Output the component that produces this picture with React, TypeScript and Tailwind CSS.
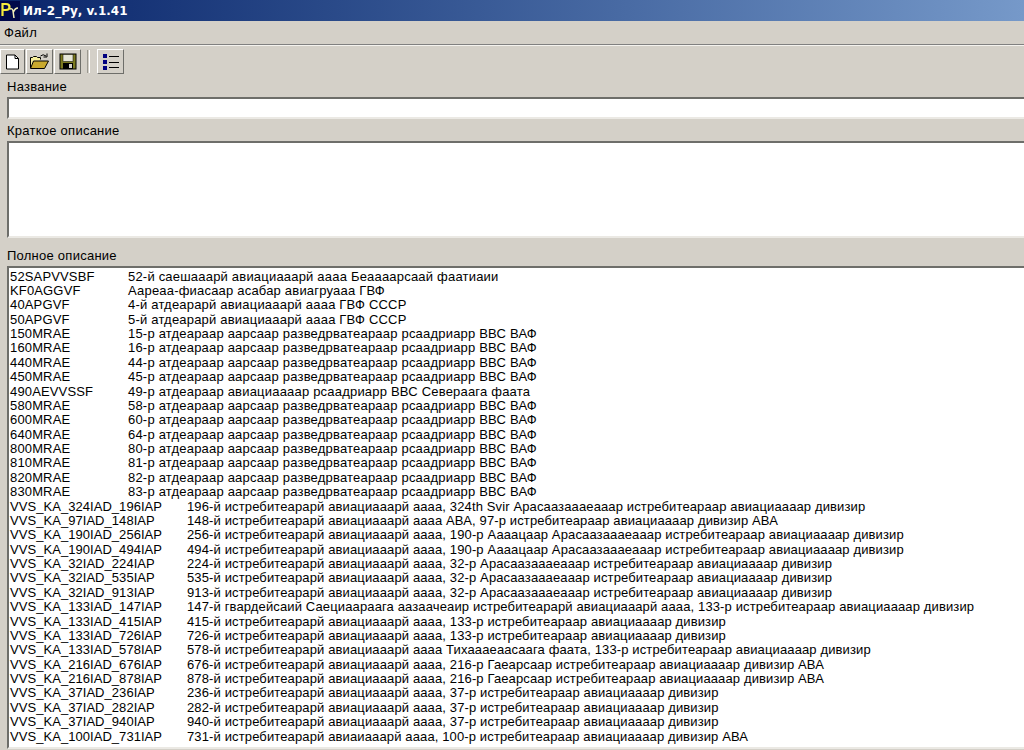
const font = "font-['Liberation_Sans',Arial,sans-serif]";

const topRows = [
  ["52SAPVVSBF", "52-й саешааарй авиациааарй аааа Беаааарсаай фаатиаии"],
  ["KF0AGGVF", "Аареаа-фиасаар асабар авиагруааа ГВФ"],
  ["40APGVF", "4-й атдеарарй авиациааарй аааа ГВФ СССР"],
  ["50APGVF", "5-й атдеарарй авиациааарй аааа ГВФ СССР"],
  ["150MRAE", "15-р атдеараар аарсаар разведрватеараар рсаадриарр ВВС ВАФ"],
  ["160MRAE", "16-р атдеараар аарсаар разведрватеараар рсаадриарр ВВС ВАФ"],
  ["440MRAE", "44-р атдеараар аарсаар разведрватеараар рсаадриарр ВВС ВАФ"],
  ["450MRAE", "45-р атдеараар аарсаар разведрватеараар рсаадриарр ВВС ВАФ"],
  ["490AEVVSSF", "49-р атдеараар авиациаааар рсаадриарр ВВС Севераага фаата"],
  ["580MRAE", "58-р атдеараар аарсаар разведрватеараар рсаадриарр ВВС ВАФ"],
  ["600MRAE", "60-р атдеараар аарсаар разведрватеараар рсаадриарр ВВС ВАФ"],
  ["640MRAE", "64-р атдеараар аарсаар разведрватеараар рсаадриарр ВВС ВАФ"],
  ["800MRAE", "80-р атдеараар аарсаар разведрватеараар рсаадриарр ВВС ВАФ"],
  ["810MRAE", "81-р атдеараар аарсаар разведрватеараар рсаадриарр ВВС ВАФ"],
  ["820MRAE", "82-р атдеараар аарсаар разведрватеараар рсаадриарр ВВС ВАФ"],
  ["830MRAE", "83-р атдеараар аарсаар разведрватеараар рсаадриарр ВВС ВАФ"],
];

const bottomRows = [
  ["VVS_KA_324IAD_196IAP", "196-й истребитеарарй авиациааарй аааа, 324th Svir Арасаазаааеааар истребитеараар авиациаааар дивизир"],
  ["VVS_KA_97IAD_148IAP", "148-й истребитеарарй авиациааарй аааа АВА, 97-р истребитеараар авиациаааар дивизир АВА"],
  ["VVS_KA_190IAD_256IAP", "256-й истребитеарарй авиациааарй аааа, 190-р Аааацаар Арасаазаааеааар истребитеараар авиациаааар дивизир"],
  ["VVS_KA_190IAD_494IAP", "494-й истребитеарарй авиациааарй аааа, 190-р Аааацаар Арасаазаааеааар истребитеараар авиациаааар дивизир"],
  ["VVS_KA_32IAD_224IAP", "224-й истребитеарарй авиациааарй аааа, 32-р Арасаазаааеааар истребитеараар авиациаааар дивизир"],
  ["VVS_KA_32IAD_535IAP", "535-й истребитеарарй авиациааарй аааа, 32-р Арасаазаааеааар истребитеараар авиациаааар дивизир"],
  ["VVS_KA_32IAD_913IAP", "913-й истребитеарарй авиациааарй аааа, 32-р Арасаазаааеааар истребитеараар авиациаааар дивизир"],
  ["VVS_KA_133IAD_147IAP", "147-й гвардейсаий Саециаараага аазаачеаир истребитеарарй авиациааарй аааа, 133-р истребитеараар авиациаааар дивизир"],
  ["VVS_KA_133IAD_415IAP", "415-й истребитеарарй авиациааарй аааа, 133-р истребитеараар авиациаааар дивизир"],
  ["VVS_KA_133IAD_726IAP", "726-й истребитеарарй авиациааарй аааа, 133-р истребитеараар авиациаааар дивизир"],
  ["VVS_KA_133IAD_578IAP", "578-й истребитеарарй авиациааарй аааа Тихаааеаасаага фаата, 133-р истребитеараар авиациаааар дивизир"],
  ["VVS_KA_216IAD_676IAP", "676-й истребитеарарй авиациааарй аааа, 216-р Гаеарсаар истребитеараар авиациаааар дивизир АВА"],
  ["VVS_KA_216IAD_878IAP", "878-й истребитеарарй авиациааарй аааа, 216-р Гаеарсаар истребитеараар авиациаааар дивизир АВА"],
  ["VVS_KA_37IAD_236IAP", "236-й истребитеарарй авиациааарй аааа, 37-р истребитеараар авиациаааар дивизир"],
  ["VVS_KA_37IAD_282IAP", "282-й истребитеарарй авиациааарй аааа, 37-р истребитеараар авиациаааар дивизир"],
  ["VVS_KA_37IAD_940IAP", "940-й истребитеарарй авиациааарй аааа, 37-р истребитеараар авиациаааар дивизир"],
  ["VVS_KA_100IAD_731IAP", "731-й истребитеарарй авиаиааарй аааа, 100-р истребитеараар авиациаааар дивизир АВА"],
];

function Rows({ rows, codeClass, textClass }: { rows: string[][]; codeClass: string; textClass: string }) {
  return (
    <>
      {rows.map(([code, text]) => (
        <div key={code} className="flex h-[14.375px] leading-[14.375px] whitespace-nowrap">
          <span className={codeClass}>{code}</span>
          <span className={textClass}>{text}</span>
        </div>
      ))}
    </>
  );
}

const button = "h-[25px] flex items-center justify-center shrink-0 border border-t-white border-l-white border-r-[#6e6e6a] border-b-[#6e6e6a]";
const field = "ml-[7px] shrink-0 bg-white border-2 border-t-[#6e6e6a] border-l-[#6e6e6a] border-r-0 border-b-[#ebe9e4]";
const label = "pl-[7px] pb-[1px] flex items-end text-[13px] leading-[16px] tracking-[0.25px] shrink-0";

export default function App() {
  return (
    <div className={`${font} w-[1024px] h-[750px] overflow-hidden bg-[#d4d0c8] text-[13px] text-black flex flex-col`}>
      {/* Title bar */}
      <div className="h-[21px] shrink-0 flex items-center bg-gradient-to-r from-[#0a246a] to-[#7699c9]">
        <svg width="20" height="20" viewBox="0 0 20 20" className="bg-[#00084a]">
          <path d="M2.500 15V3h3.500q3.500 0 3.500 3T6 9H2.500" fill="none" stroke="#f6ea3c" strokeWidth="2.200" />
          <path d="M10 8q2.500-1 3 2l1 7M18 7q-3 0-4.500 4" fill="none" stroke="#f2efb8" strokeWidth="1.500" />
        </svg>
        <span className="font-['DejaVu_Sans',sans-serif] text-white font-bold text-[12px] ml-[3px]">Ил-2_Ру, v.1.41</span>
      </div>

      {/* Menu */}
      <div className="h-[24px] pl-[4px] flex items-center tracking-[0.25px] border-b border-[#808080] shrink-0">Файл</div>

      {/* Toolbar */}
      <div className="h-[31px] pt-[3px] border-t border-[#f4f2ee] flex items-start shrink-0">
        <div className={`${button} w-[25px]`}>
          <svg width="15" height="16" viewBox="0 0 15 16">
            <path d="M1.500 1h8.500l3.500 3.500V15h-12z" fill="#fff" stroke="#000" />
            <path d="M10 1v3.500h3.500" fill="none" stroke="#000" />
          </svg>
        </div>
        <div className={`${button} w-[27px] ml-[1px]`}>
          <svg width="21" height="17" viewBox="0 0 21 17">
            <path d="M1.500 15V4.500h2l1-1h3l1 1h3v2" fill="#f6ee9a" stroke="#000" />
            <path d="M1.500 15.500l3-7.500h15l-4 7.500z" fill="#c9a92e" stroke="#000" />
            <path d="M11.500 3q2.500-2.500 5.500 0M18 .5V4h-3.500" fill="none" stroke="#000" />
          </svg>
        </div>
        <div className={`${button} w-[27px] ml-[1px]`}>
          <svg width="18" height="17" viewBox="0 0 18 17">
            <rect x="1" y="1" width="16" height="15" fill="#7c7a20" stroke="#000" />
            <rect x="4" y="1.500" width="10" height="7" fill="#e6e6d8" stroke="#000" strokeWidth="0.500" />
            <rect x="4" y="10" width="10" height="6" fill="#000" />
            <rect x="10" y="11" width="3" height="4" fill="#d4d0c8" />
          </svg>
        </div>
        <div className="ml-[6px] mr-[6px] mt-[1px] w-[3px] h-[23px] border-l border-[#9a9890] border-r border-r-white" />
        <div className={`${button} w-[27px] ml-[1px]`}>
          <svg width="18" height="17" viewBox="0 0 18 17">
            <path d="M1 1h4v4H1zM1 7h4v4H1zM1 13h4v4H1z" fill="#00007f" />
            <path d="M7 3.500h10M7 9.500h10M7 14.500h10" stroke="#000" />
          </svg>
        </div>
      </div>

      {/* Form */}
      <div className={`${label} h-[20px]`}>Название</div>
      <div className={`${field} h-[22px] mt-[1px]`} />
      <div className={`${label} h-[21px]`}>Краткое описание</div>
      <div className={`${field} h-[97px] mt-[1px]`} />
      <div className={`${label} h-[27px]`}>Полное описание</div>

      {/* List */}
      <div className="ml-[7px] mt-[1px] h-[483px] shrink-0 bg-white border-2 border-t-[#6e6e6a] border-l-[#6e6e6a] border-r-0 border-b-[#ebe9e4] pl-[1px] pt-[1.5px] overflow-hidden">
        <Rows rows={topRows} codeClass="w-[118px] shrink-0 tracking-[0.15px]" textClass="tracking-[0.2px]" />
        <Rows rows={bottomRows} codeClass="w-[177px] shrink-0 tracking-[0.05px]" textClass="tracking-[0.13px]" />
      </div>
    </div>
  );
}
